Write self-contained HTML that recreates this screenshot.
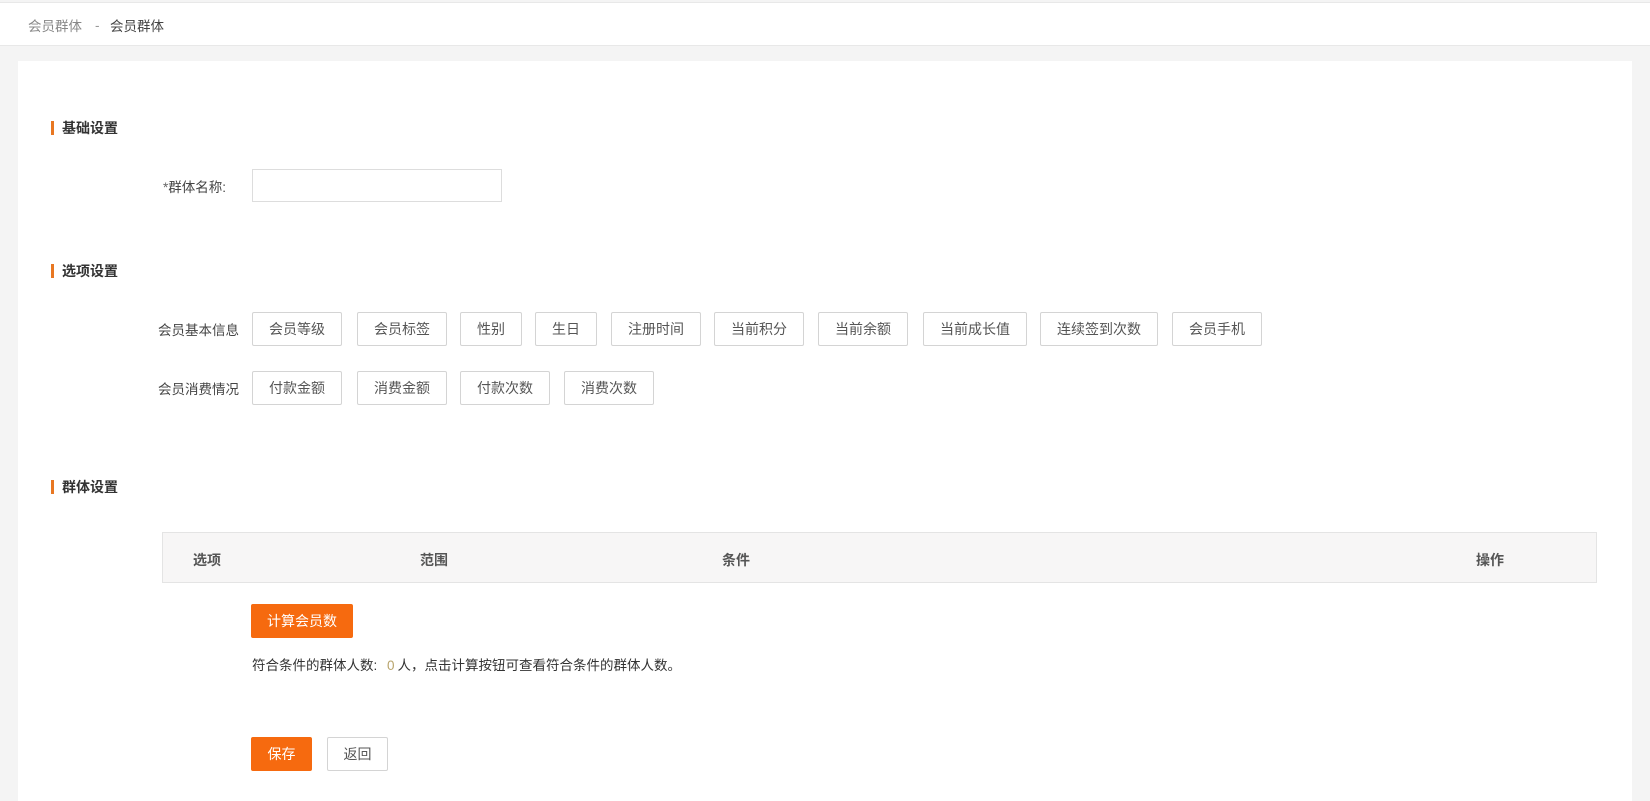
<!DOCTYPE html>
<html><head><meta charset="utf-8"><style>
*{margin:0;padding:0;box-sizing:border-box}
body{width:1650px;height:790px;background:#f4f4f4;font-family:"Liberation Sans","Noto Sans CJK SC",sans-serif;font-size:14px;color:#333;position:relative;overflow:hidden}
.abs{position:absolute}
.bc{left:0;top:2px;width:1650px;height:44px;background:#fff;border-top:1px solid #e8e8e8;border-bottom:1px solid #e8e8e8}
.bc span{position:absolute;top:12px;font-size:13.5px}
.panel{left:18px;top:61px;width:1614px;height:740px;background:#fff}
.h{font-weight:bold;font-size:14px;color:#333;border-left:3px solid #e87722;padding-left:8px;line-height:14px;left:51px}
.lbl{font-size:13.5px;color:#444;line-height:20px}
.btn{position:absolute;height:34px;border:1px solid #d4d4d4;background:#fff;color:#555;font-size:14px;line-height:32px;padding:0 16px;white-space:nowrap;border-radius:2px}
.or{background:#f66a0f;border-color:#f66a0f;color:#fff}
.th{position:absolute;top:17px;font-weight:bold;color:#555;font-size:14px}
</style></head><body>
<div class="abs bc"><span style="left:28px;color:#888">会员群体</span><span style="left:95px;top:15px;color:#999">-</span><span style="left:110px;color:#444">会员群体</span></div>
<div class="abs panel"></div>
<div class="abs h" style="top:121px">基础设置</div>
<div class="abs lbl" style="left:163px;top:178px"><span style="color:#666">*</span>群体名称:</div>
<div class="abs" style="left:252px;top:169px;width:250px;height:33px;border:1px solid #ddd;background:#fff"></div>
<div class="abs h" style="top:264px">选项设置</div>
<div class="abs lbl" style="left:158px;top:321px">会员基本信息</div>
<div class="btn" style="left:252px;top:312px">会员等级</div>
<div class="btn" style="left:357px;top:312px">会员标签</div>
<div class="btn" style="left:460px;top:312px">性别</div>
<div class="btn" style="left:535px;top:312px">生日</div>
<div class="btn" style="left:611px;top:312px">注册时间</div>
<div class="btn" style="left:714px;top:312px">当前积分</div>
<div class="btn" style="left:818px;top:312px">当前余额</div>
<div class="btn" style="left:923px;top:312px">当前成长值</div>
<div class="btn" style="left:1040px;top:312px">连续签到次数</div>
<div class="btn" style="left:1172px;top:312px">会员手机</div>
<div class="abs lbl" style="left:158px;top:380px">会员消费情况</div>
<div class="btn" style="left:252px;top:371px">付款金额</div>
<div class="btn" style="left:357px;top:371px">消费金额</div>
<div class="btn" style="left:460px;top:371px">付款次数</div>
<div class="btn" style="left:564px;top:371px">消费次数</div>
<div class="abs h" style="top:480px">群体设置</div>
<div class="abs" style="left:162px;top:532px;width:1435px;height:51px;background:#f7f6f6;border:1px solid #e4e4e4">
<span class="th" style="left:30px">选项</span><span class="th" style="left:257px">范围</span><span class="th" style="left:559px">条件</span><span class="th" style="left:1313px">操作</span></div>
<div class="btn or" style="left:251px;top:604px;width:102px;text-align:center;padding:0">计算会员数</div>
<div class="abs lbl" style="left:252px;top:656px;color:#333">符合条件的群体人数: <span style="color:#b8a46c;margin:0 3px 0 6px">0</span>人，点击计算按钮可查看符合条件的群体人数。</div>
<div class="btn or" style="left:251px;top:737px;width:61px;text-align:center;padding:0">保存</div>
<div class="btn" style="left:327px;top:737px;width:61px;text-align:center;padding:0">返回</div>
</body></html>
